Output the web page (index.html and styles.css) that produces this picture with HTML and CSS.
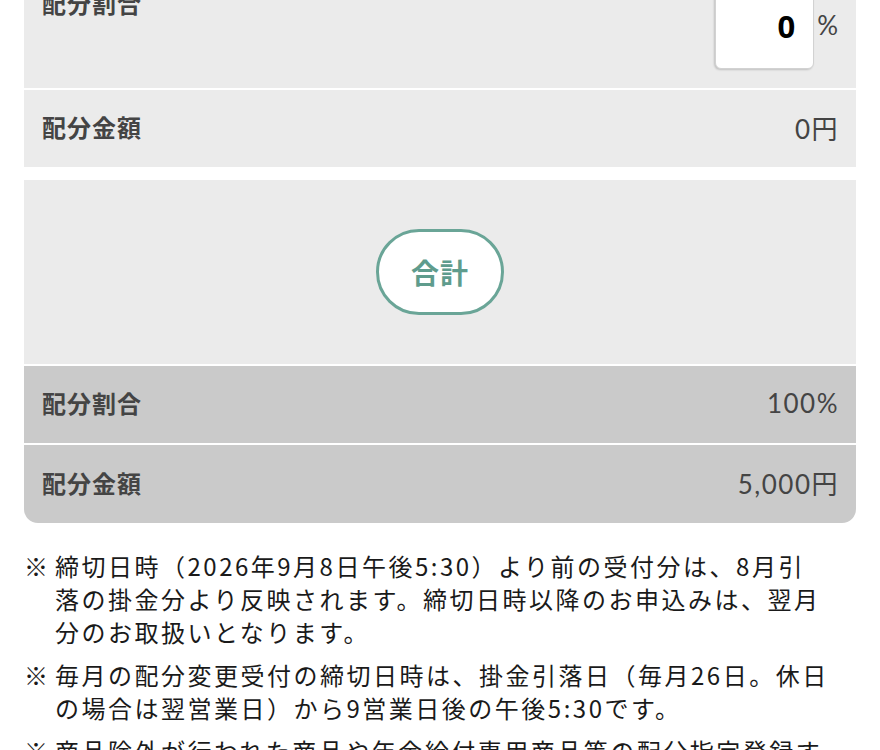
FILE: index.html
```html
<!DOCTYPE html>
<html lang="ja">
<head>
<meta charset="utf-8">
<title>配分</title>
<link rel="stylesheet" href="styles.css">
</head>
<body>
<div class="page">
  <div class="panel">
    <div class="row row-input">
      <span class="label label-top">配分割合</span>
      <div class="ratio">
        <div class="input">0</div>
        <span class="unit">%</span>
      </div>
    </div>
    <div class="row">
      <span class="label">配分金額</span>
      <span class="value">0円</span>
    </div>
  </div>

  <div class="total-panel">
    <div class="btn-area">
      <button class="btn-total" type="button">合計</button>
    </div>
    <div class="row row-dark">
      <span class="label">配分割合</span>
      <span class="value">100%</span>
    </div>
    <div class="row row-dark row-last">
      <span class="label">配分金額</span>
      <span class="value">5,000円</span>
    </div>
  </div>

  <ul class="notes">
    <li><span class="mark">※</span>締切日時（2026年9月8日午後5:30）より前の受付分は、8月引落の掛金分より反映されます。締切日時以降のお申込みは、翌月分のお取扱いとなります。</li>
    <li><span class="mark">※</span>毎月の配分変更受付の締切日時は、掛金引落日（毎月26日。休日の場合は翌営業日）から9営業日後の午後5:30です。</li>
    <li><span class="mark">※</span>商品除外が行われた商品や年金給付専用商品等の配分指定登録することはできません。</li>
  </ul>
</div>
</body>
</html>
```

FILE: styles.css
```css
html, body {
  margin: 0;
  padding: 0;
  background: #fff;
}

body {
  font-family: "Noto Sans CJK JP", "Noto Sans", sans-serif;
  color: #444;
}

.page {
  padding: 0 24px;
  margin-top: -33px;
}

.panel {
  background: #ebebeb;
}

.row {
  box-sizing: border-box;
  height: 79px;
  padding: 0 18px 3px;
  display: flex;
  align-items: center;
  justify-content: space-between;
}

.row + .row,
.row-dark {
  border-top: 2px solid #fff;
}

.row-input {
  height: 121px;
  padding: 18px 18px 19px;
  align-items: flex-start;
}

.label {
  font-size: 24px;
  font-weight: 700;
  letter-spacing: 1px;
  color: #444;
  line-height: 36px;
}

.value {
  font-family: "Lato", "Noto Sans CJK JP", sans-serif;
  font-size: 26px;
  color: #444;
  letter-spacing: 1.5px;
  margin-right: -1px;
}

.ratio {
  display: flex;
  align-items: center;
  gap: 3px;
}

.input {
  box-sizing: border-box;
  width: 99px;
  height: 84px;
  background: #fff;
  border: 1px solid #d2d2d2;
  border-radius: 6px;
  box-shadow: -1px 1px 2px rgba(0, 0, 0, 0.18);
  font-family: "Noto Sans", "Liberation Sans", sans-serif;
  font-size: 31px;
  font-weight: 700;
  color: #000;
  text-align: right;
  padding: 0 18px 0 0;
  line-height: 80px;
}

.unit {
  font-family: "Lato", sans-serif;
  font-size: 26px;
  color: #444;
  line-height: 30px;
  margin-bottom: 4px;
}

.total-panel {
  margin-top: 13px;
  border-radius: 0 0 14px 14px;
  overflow: hidden;
}

.btn-area {
  background: #ebebeb;
  height: 184px;
  display: flex;
  align-items: center;
  justify-content: center;
}

.btn-total {
  box-sizing: border-box;
  width: 128px;
  height: 86px;
  border: 3px solid #6aa597;
  border-radius: 43px;
  background: #fff;
  color: #5f9c8d;
  font-family: "Noto Sans CJK JP", sans-serif;
  font-size: 28px;
  font-weight: 700;
  letter-spacing: 1px;
  padding: 0;
  cursor: pointer;
}

.row-dark {
  background: #cacaca;
}

.row-last {
  height: 80px;
}

.notes {
  list-style: none;
  margin: 26px 0 0;
  padding: 0 25px 0 31px;
  font-size: 24px;
  line-height: 33px;
  letter-spacing: 2.5px;
  color: #1a1a1a;
}

.notes li + li {
  margin-top: 10px;
}

.mark {
  display: inline-block;
  width: 31px;
  margin-left: -31px;
  letter-spacing: 0;
}
```
